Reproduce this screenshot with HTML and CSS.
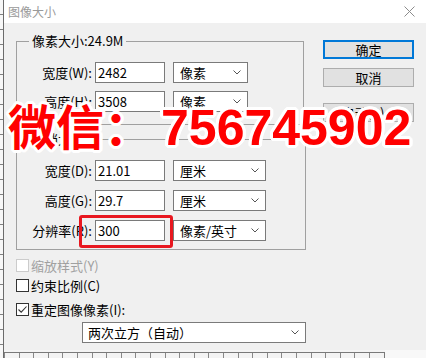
FILE: index.html
```html
<!DOCTYPE html>
<html lang="zh-CN">
<head>
  <meta charset="UTF-8">
  <meta name="viewport" content="width=device-width, initial-scale=1.0">
  <title>图像大小</title>
  <link rel="stylesheet" href="styles.css">
</head>
<body>
<div class="desk">
  <div class="ruler-left"></div>

  <div class="workspace">
    <div class="dialog">
      <div class="title-bar">
        <span class="title">图像大小</span>
        <svg class="close" width="11" height="11" viewBox="0 0 11 11">
          <path d="M0.5 0.5 L10.5 10.5 M10.5 0.5 L0.5 10.5" stroke="#8c8c8c" stroke-width="1" fill="none"/>
        </svg>
      </div>

      <div class="dialog-body">
        <div class="form-col">
          <fieldset class="group group-pixels">
            <legend>像素大小:24.9M</legend>
            <div class="field-grid">
              <label class="field-label">宽度(W):</label>
              <input class="num-input" type="text" value="2482">
              <div class="select">像素<svg class="chevron" width="8" height="5" viewBox="0 0 8 5"><path d="M0.5 0.5 L4 4 L7.5 0.5" stroke="#555" fill="none"/></svg></div>

              <label class="field-label">高度(H):</label>
              <input class="num-input" type="text" value="3508">
              <div class="select">像素<svg class="chevron" width="8" height="5" viewBox="0 0 8 5"><path d="M0.5 0.5 L4 4 L7.5 0.5" stroke="#555" fill="none"/></svg></div>
            </div>
          </fieldset>

          <fieldset class="group group-doc">
            <legend>文档大小:</legend>
            <div class="field-grid">
              <label class="field-label">宽度(D):</label>
              <input class="num-input" type="text" value="21.01">
              <div class="select">厘米<svg class="chevron" width="8" height="5" viewBox="0 0 8 5"><path d="M0.5 0.5 L4 4 L7.5 0.5" stroke="#555" fill="none"/></svg></div>

              <label class="field-label">高度(G):</label>
              <input class="num-input" type="text" value="29.7">
              <div class="select">厘米<svg class="chevron" width="8" height="5" viewBox="0 0 8 5"><path d="M0.5 0.5 L4 4 L7.5 0.5" stroke="#555" fill="none"/></svg></div>

              <label class="field-label">分辨率(R):</label>
              <input class="num-input" type="text" value="300">
              <div class="select">像素/英寸<svg class="chevron" width="8" height="5" viewBox="0 0 8 5"><path d="M0.5 0.5 L4 4 L7.5 0.5" stroke="#555" fill="none"/></svg></div>
            </div>
          </fieldset>

          <div class="checks">
            <div class="check disabled"><span class="check-box"></span>缩放样式(Y)</div>
            <div class="check"><span class="check-box"></span>约束比例(C)</div>
            <div class="check check-resample">
              <span class="check-box"><svg width="11" height="11" viewBox="0 0 11 11"><path d="M1.5 5.5 L4.2 8.2 L9.5 2.5" stroke="#333" stroke-width="1.1" fill="none"/></svg></span>重定图像像素(I):
            </div>
          </div>

          <div class="select resample">两次立方（自动）<svg class="chevron" width="8" height="5" viewBox="0 0 8 5"><path d="M0.5 0.5 L4 4 L7.5 0.5" stroke="#555" fill="none"/></svg></div>
        </div>

        <div class="button-col">
          <button class="btn btn-default">确定</button>
          <button class="btn">取消</button>
          <button class="btn btn-auto">自动(A)...</button>
        </div>
      </div>
    </div>

    <div class="ruler-bottom">
      <div class="ruler-scale"></div>
      <div class="ruler-rest"></div>
    </div>
  </div>

  <!-- annotation overlays -->
  <div class="mark"></div>
  <div class="watermark"><span class="wm-cn">微信：</span><span class="wm-num">756745902</span></div>
</div>
</body>
</html>
```

FILE: styles.css
```css
* {
  box-sizing: border-box;
  margin: 0;
  padding: 0;
}

body {
  width: 426px;
  height: 358px;
  overflow: hidden;
  font-family: "Noto Sans CJK SC", "Noto Sans", sans-serif;
  font-size: 13px;
  color: #000;
  background-color: #f0f0f0;
}

.desk {
  position: relative;
  display: flex;
  width: 426px;
  height: 358px;
}

.ruler-left {
  width: 4px;
  border-right: 1px solid #6b6b6b;
  background: #f7f7f7 repeating-linear-gradient(to bottom, transparent 0 14px, #808080 14px 15px);
}

.workspace {
  flex: 1;
  display: flex;
  flex-direction: column;
}

.dialog {
  height: 350px;
  background-color: #f0f0f0;
  display: flex;
  flex-direction: column;
}

.title-bar {
  height: 23px;
  background-color: #fff;
  display: flex;
  align-items: center;
  justify-content: space-between;
  padding: 0 11px 0 4px;
}

.title {
  font-size: 12px;
  color: #9a9a9a;
}

.dialog-body {
  flex: 1;
  display: flex;
  align-items: flex-start;
  padding-left: 12px;
}

.form-col {
  width: 290px;
  display: flex;
  flex-direction: column;
}

/* group boxes */
.group {
  border: 1px solid #a0a0a0;
}

.group legend {
  margin-left: 12px;
  padding: 0 3px;
  font-size: 13px;
  line-height: 16px;
}

.group-pixels {
  margin: 10px 2px 0 0;
}

.group-doc {
  margin-top: 6px;
}

.field-grid {
  display: grid;
  align-items: center;
}

.group-pixels .field-grid {
  grid-template-columns: 78px 78px 75px;
  row-gap: 8px;
  padding: 13px 0 12px;
}

.group-doc .field-grid {
  grid-template-columns: 78px 78px 93px;
  row-gap: 9px;
  padding: 13px 0 8px;
}

.field-label {
  text-align: right;
  padding-right: 3px;
  white-space: nowrap;
}

.num-input {
  width: 70px;
  height: 21px;
  border: 1px solid #7a7a7a;
  background-color: #fff;
  padding-left: 2px;
  font: inherit;
  color: #000;
  outline: none;
}

.select {
  height: 21px;
  display: flex;
  align-items: center;
  justify-content: space-between;
  padding: 0 6px;
  border: 1px solid #7a7a7a;
  background-color: #fff;
  white-space: nowrap;
}

.chevron {
  flex: none;
}

/* checkboxes */
.checks {
  margin-top: 9px;
  display: flex;
  flex-direction: column;
  gap: 7px;
}

.check {
  display: flex;
  align-items: center;
  gap: 2px;
  height: 13px;
  white-space: nowrap;
}

.check-box {
  flex: none;
  width: 13px;
  height: 13px;
  border: 1px solid #333;
  background-color: #fff;
  display: flex;
}

.check.disabled {
  color: #a0a0a0;
}

.check.disabled .check-box {
  border-color: #cccccc;
}

.check-resample {
  margin-top: 4px;
}

.resample {
  margin: 6px 0 0 66px;
  width: 224px;
  padding-left: 5px;
}

/* buttons */
.button-col {
  margin: 17px 0 0 17px;
  width: 91px;
  display: flex;
  flex-direction: column;
  gap: 9px;
}

.btn {
  height: 19px;
  border: 1px solid #adadad;
  background-color: #e1e1e1;
  font: inherit;
  line-height: 17px;
  text-align: center;
  color: #000;
}

.btn-default {
  border: 2px solid #0078d7;
  line-height: 15px;
}

.btn-auto {
  margin-top: 7px;
}

/* bottom ruler */
.ruler-bottom {
  height: 8px;
  display: flex;
  background-color: #f4f4f4;
}

.ruler-scale {
  width: 381px;
  margin-top: 2px;
  border-top: 1px solid #7a7a7a;
  border-right: 1px solid #7a7a7a;
  background: repeating-linear-gradient(to right, #888 0 1px, transparent 1px 14.6px);
}

.ruler-rest {
  flex: 1;
  background-color: #f8f8f8;
}

/* overlays */
.mark {
  position: absolute;
  left: 79px;
  top: 215px;
  width: 94px;
  height: 33px;
  border: 3px solid #e8171f;
  border-radius: 3px;
}

.watermark {
  position: absolute;
  left: 8px;
  top: 99px;
  font-family: "Liberation Sans", Arial, sans-serif;
  font-size: 50px;
  font-weight: 700;
  line-height: 50px;
  color: #ff0000;
  white-space: nowrap;
  text-shadow:
    3px 0 #fff, -3px 0 #fff, 0 3px #fff, 0 -3px #fff,
    2px 2px #fff, -2px 2px #fff, 2px -2px #fff, -2px -2px #fff,
    3px 1px #fff, -3px 1px #fff, 3px -1px #fff, -3px -1px #fff,
    1px 3px #fff, -1px 3px #fff, 1px -3px #fff, -1px -3px #fff;
}

.wm-cn {
  font-family: "Noto Sans CJK SC", sans-serif;
  font-size: 48px;
}

.wm-num {
  margin-left: 9px;
}
```
